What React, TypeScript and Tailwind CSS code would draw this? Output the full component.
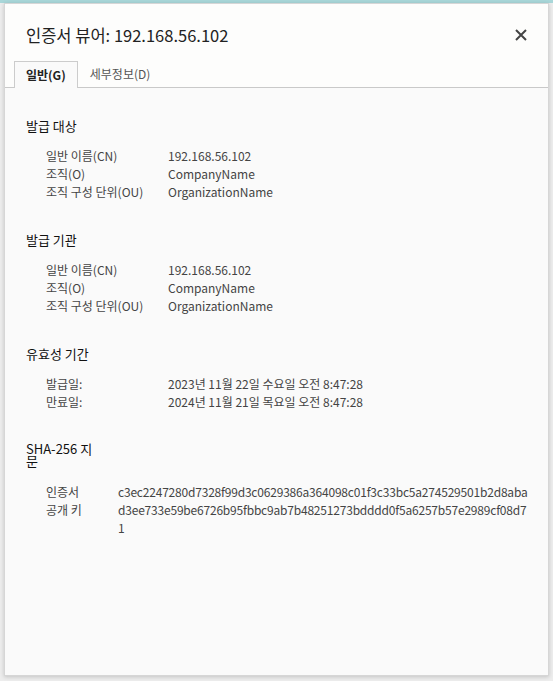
import React from 'react';

const font = { fontFamily: '"Noto Sans CJK KR", "Noto Sans", sans-serif' };

type Field = { label: React.ReactNode; value: React.ReactNode };

const sections: { title: string; fields: Field[] }[] = [
  {
    title: '발급 대상',
    fields: [
      { label: '일반 이름(CN)', value: '192.168.56.102' },
      { label: '조직(O)', value: 'CompanyName' },
      { label: '조직 구성 단위(OU)', value: 'OrganizationName' },
    ],
  },
  {
    title: '발급 기관',
    fields: [
      { label: '일반 이름(CN)', value: '192.168.56.102' },
      { label: '조직(O)', value: 'CompanyName' },
      { label: '조직 구성 단위(OU)', value: 'OrganizationName' },
    ],
  },
  {
    title: '유효성 기간',
    fields: [
      { label: '발급일:', value: '2023년 11월 22일 수요일 오전 8:47:28' },
      { label: '만료일:', value: '2024년 11월 21일 목요일 오전 8:47:28' },
    ],
  },
];

const Section = ({ title, fields, first }: { title: string; fields: Field[]; first?: boolean }) => (
  <div className={first ? '' : 'mt-[30px]'}>
    <div className="text-[13px] leading-[18px] text-[#111]">{title}</div>
    <div className="mt-[12px] pl-[20px]">
      {fields.map((f, i) => (
        <div key={i} className="flex text-[12px] leading-[18px] text-[#444]">
          <div className="w-[122px] shrink-0">{f.label}</div>
          <div>{f.value}</div>
        </div>
      ))}
    </div>
  </div>
);

export default function App() {
  return (
    <div className="h-[681px] w-[553px] bg-[#ededed] overflow-hidden" style={font}>
      <div className="h-[3px] bg-[#a9d7d9]" />
      <div className="ml-[4px] mr-[4px] h-[673px] border border-[#d6d6d6] bg-[#fafafa] shadow-[0_1px_4px_rgba(0,0,0,0.18)] flex flex-col">
        {/* header */}
        <div className="bg-[#fdfdfc]">
          <div className="flex items-center justify-between pl-[21px] pr-[21px] pt-[6px] h-[55px]">
            <div className="text-[16.5px] leading-[24px] text-[#222]">인증서 뷰어: 192.168.56.102</div>
            <svg width="12" height="12" viewBox="0 0 12 12">
              <path d="M1 1 L11 11 M11 1 L1 11" stroke="#444" strokeWidth="2" />
            </svg>
          </div>
          <div className="flex items-end h-[29px] border-b border-[#c9c9c9] pl-[9px]">
            <div className="h-[27px] -mb-px px-[11px] border border-b-0 border-[#cccccc] bg-[#fafafa] flex items-center text-[12px] font-bold text-[#222]">
              일반(G)
            </div>
            <div className="h-[27px] px-[12px] flex items-center text-[12px] text-[#555]">세부정보(D)</div>
          </div>
        </div>

        {/* body */}
        <div className="pt-[29px] pl-[21px] pr-[20px]">
          {sections.map((s, i) => (
            <Section key={s.title} title={s.title} fields={s.fields} first={i === 0} />
          ))}

          <div className="mt-[32px]">
            <div className="text-[13px] leading-[12px] text-[#111]">
              SHA-256 지<br />문
            </div>
            <div className="mt-[16px] pl-[20px] flex text-[12px] leading-[18px] text-[#444]">
              <div className="w-[72px] shrink-0">
                인증서
                <br />
                공개 키
              </div>
              <div className="tracking-[-0.2px]">
                <div>c3ec2247280d7328f99d3c0629386a364098c01f3c33bc5a274529501b2d8aba</div>
                <div>d3ee733e59be6726b95fbbc9ab7b48251273bdddd0f5a6257b57e2989cf08d7</div>
                <div>1</div>
              </div>
            </div>
          </div>
        </div>
      </div>
    </div>
  );
}
